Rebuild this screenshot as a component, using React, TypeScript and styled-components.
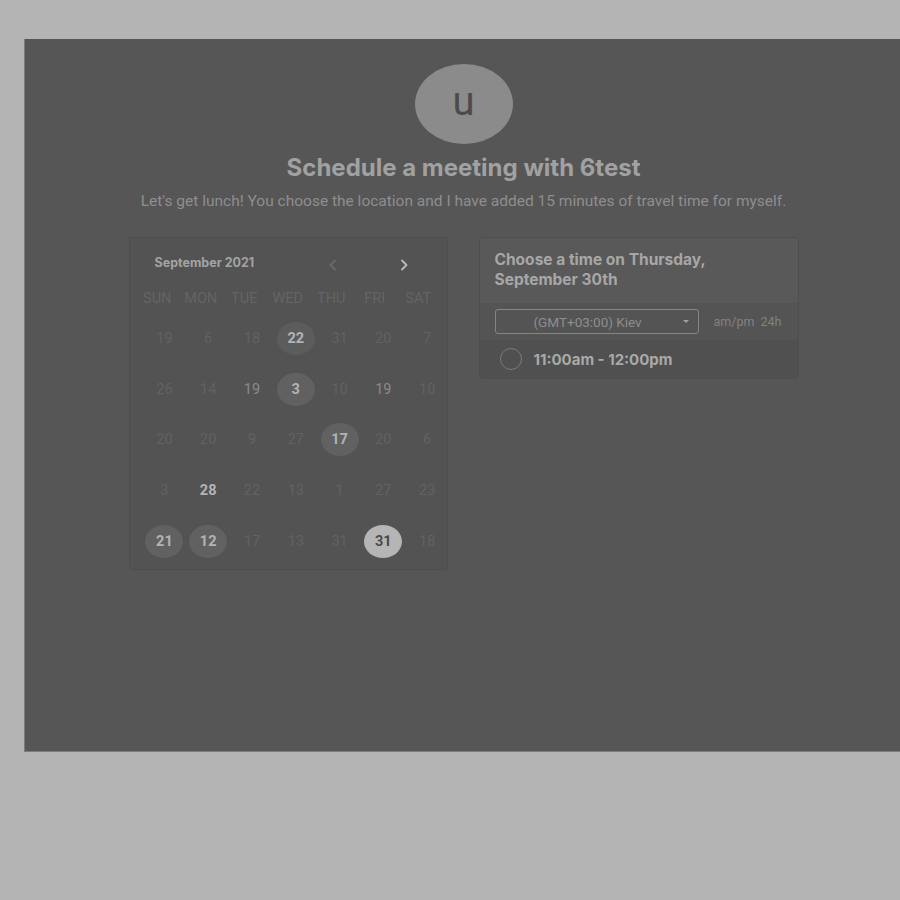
import React from "react";
import styled, { createGlobalStyle } from "styled-components";

const Global = createGlobalStyle`
  html, body { margin: 0; padding: 0; background: #b4b4b4; overflow: hidden; }
  body { font-family: Inter, "Liberation Sans", sans-serif; }
`;

const Page = styled.div`
  width: 900px;
  height: 900px;
  padding-top: 39px;
  padding-left: 24px;
  box-sizing: border-box;
  overflow: hidden;
`;

const Panel = styled.div`
  width: 878px;
  height: 713px;
  box-sizing: border-box;
  background: #565656;
  border-left: 1px solid #7c7c7c;
  border-bottom: 1px solid #7c7c7c;
  display: flex;
  flex-direction: column;
  align-items: center;
  padding-top: 25px;
`;

const Avatar = styled.div`
  width: 98px;
  height: 80px;
  border-radius: 50%;
  background: #8b8b8b;
  color: #4b4b4b;
  display: flex;
  align-items: center;
  justify-content: center;
  font-family: Roboto, "Liberation Sans", sans-serif;
  font-size: 40px;
  line-height: 1;
  padding-bottom: 4px;
  box-sizing: border-box;
`;

const Title = styled.h1`
  margin: 10px 0 0;
  font-family: Inter, "Liberation Sans", sans-serif;
  font-weight: 700;
  font-size: 24px;
  line-height: 28px;
  color: #a1a1a1;
`;

const Subtitle = styled.p`
  margin: 10px 0 0;
  font-family: Roboto, "Liberation Sans", sans-serif;
  font-size: 15.5px;
  line-height: 18px;
  color: #8e8e8e;
`;

const Cards = styled.div`
  margin-top: 27px;
  display: flex;
  gap: 31px;
  align-items: flex-start;
`;

const CalendarCard = styled.div`
  width: 319px;
  height: 333px;
  box-sizing: border-box;
  background: #535353;
  border: 1px solid #4d4d4d;
  border-radius: 3px;
  padding: 13px 0 0 6px;
`;

const MonthBar = styled.div`
  display: flex;
  align-items: center;
  height: 22px;
  padding-left: 19px;
`;

const MonthLabel = styled.div`
  font-family: Inter, "Liberation Sans", sans-serif;
  font-weight: 700;
  font-size: 12.5px;
  color: #a3a3a3;
  width: 168px;
`;

const Arrow = styled.span<{ $active?: boolean }>`
  display: flex;
  align-items: center;
  justify-content: center;
  width: 20px;
  height: 22px;
  margin-top: 5px;
  color: ${(p) => (p.$active ? "#bcbcbc" : "#6a6a6a")};
`;

const ArrowGap = styled.div`
  width: 51px;
`;

const Weekdays = styled.div`
  display: grid;
  grid-template-columns: repeat(7, 43.5px);
  margin-top: 17px;
  height: 16px;
  align-items: center;
`;

const Weekday = styled.div`
  text-align: center;
  font-family: Roboto, "Liberation Sans", sans-serif;
  font-size: 14.5px;
  color: #646464;
`;

const Days = styled.div`
  display: grid;
  grid-template-columns: repeat(7, 43.8px);
  grid-auto-rows: 50.75px;
  margin-top: 7px;
  margin-left: 7px;
`;

const DayCell = styled.div`
  display: flex;
  align-items: center;
  justify-content: center;
`;

type Kind = "dim" | "mid" | "bold" | "circle" | "dotted" | "selected";

const DayNum = styled.div<{ $kind: Kind }>`
  width: 38px;
  height: 33px;
  border-radius: 50%;
  display: flex;
  align-items: center;
  justify-content: center;
  font-family: Roboto, "Liberation Sans", sans-serif;
  font-size: 14.5px;
  font-weight: ${(p) => (p.$kind === "dim" || p.$kind === "mid" ? 400 : 700)};
  color: ${(p) =>
    p.$kind === "dim"
      ? "#626262"
      : p.$kind === "mid"
      ? "#8a8a8a"
      : p.$kind === "selected"
      ? "#4a4a4a"
      : "#b3b3b3"};
  background: ${(p) =>
    p.$kind === "circle"
      ? "#616161"
      : p.$kind === "dotted"
      ? "#5c5c5c"
      : p.$kind === "selected"
      ? "#b5b5b5"
      : "transparent"};
`;

const TimeCard = styled.div`
  width: 320px;
  box-sizing: border-box;
  border: 1px solid #4f4f4f;
  border-radius: 3px;
  overflow: hidden;
`;

const TimeHeader = styled.div`
  background: #595959;
  height: 65px;
  box-sizing: border-box;
  padding: 12px 16px 0 15px;
  font-family: Inter, "Liberation Sans", sans-serif;
  font-weight: 700;
  font-size: 15.5px;
  line-height: 20px;
  color: #a7a7a7;
`;

const ZoneRow = styled.div`
  background: #545454;
  height: 37px;
  display: flex;
  align-items: center;
  padding-left: 15px;
  gap: 15px;
`;

const ZoneSelect = styled.div`
  width: 204px;
  height: 25px;
  box-sizing: border-box;
  border: 1px solid #858585;
  border-radius: 3px;
  display: flex;
  align-items: center;
  padding-left: 38px;
  padding-right: 9px;
  font-family: Roboto, "Liberation Sans", sans-serif;
  font-size: 13.5px;
  color: #8e8e8e;
`;

const ZoneText = styled.span`
  flex: 1;
`;

const Caret = styled.span`
  width: 0;
  height: 0;
  border-left: 3px solid transparent;
  border-right: 3px solid transparent;
  border-top: 3px solid #a0a0a0;
`;

const Format = styled.div`
  font-family: Roboto, "Liberation Sans", sans-serif;
  font-size: 12.5px;
  color: #828282;
  word-spacing: 3px;
`;

const SlotRow = styled.div`
  background: #505050;
  height: 38px;
  display: flex;
  align-items: center;
  padding-left: 20px;
  gap: 12px;
`;

const Radio = styled.span`
  width: 22px;
  height: 22px;
  box-sizing: border-box;
  border-radius: 50%;
  border: 1.5px solid #7a7a7a;
`;

const SlotText = styled.span`
  font-family: Inter, "Liberation Sans", sans-serif;
  font-weight: 700;
  font-size: 15px;
  color: #a9a9a9;
`;

const weekdays = ["SUN", "MON", "TUE", "WED", "THU", "FRI", "SAT"];

const days: [string, Kind][] = [
  ["19", "dim"], ["6", "dim"], ["18", "dim"], ["22", "dotted"], ["31", "dim"], ["20", "dim"], ["7", "dim"],
  ["26", "dim"], ["14", "dim"], ["19", "mid"], ["3", "circle"], ["10", "dim"], ["19", "mid"], ["10", "dim"],
  ["20", "dim"], ["20", "dim"], ["9", "dim"], ["27", "dim"], ["17", "circle"], ["20", "dim"], ["6", "dim"],
  ["3", "dim"], ["28", "bold"], ["22", "dim"], ["13", "dim"], ["1", "dim"], ["27", "dim"], ["23", "dim"],
  ["21", "circle"], ["12", "circle"], ["17", "dim"], ["13", "dim"], ["31", "dim"], ["31", "selected"], ["18", "dim"],
];

const Chevron = ({ dir }: { dir: "left" | "right" }) => (
  <svg width="10" height="12" viewBox="0 0 10 12" fill="none">
    <path
      d={dir === "left" ? "M7 1.5L2.5 6L7 10.5" : "M3 1.5L7.5 6L3 10.5"}
      stroke="currentColor"
      strokeWidth="1.8"
      strokeLinecap="round"
      strokeLinejoin="round"
    />
  </svg>
);

export default function App() {
  return (
    <>
      <Global />
      <Page>
        <Panel>
          <Avatar>u</Avatar>
          <Title>Schedule a meeting with 6test</Title>
          <Subtitle>
            Let's get lunch! You choose the location and I have added 15 minutes of travel time for myself.
          </Subtitle>
          <Cards>
            <CalendarCard>
              <MonthBar>
                <MonthLabel>September 2021</MonthLabel>
                <Arrow>
                  <Chevron dir="left" />
                </Arrow>
                <ArrowGap />
                <Arrow $active>
                  <Chevron dir="right" />
                </Arrow>
              </MonthBar>
              <Weekdays>
                {weekdays.map((w) => (
                  <Weekday key={w}>{w}</Weekday>
                ))}
              </Weekdays>
              <Days>
                {days.map(([n, k], i) => (
                  <DayCell key={i}>
                    <DayNum $kind={k}>{n}</DayNum>
                  </DayCell>
                ))}
              </Days>
            </CalendarCard>
            <TimeCard>
              <TimeHeader>
                Choose a time on Thursday,
                <br />
                September 30th
              </TimeHeader>
              <ZoneRow>
                <ZoneSelect>
                  <ZoneText>(GMT+03:00) Kiev</ZoneText>
                  <Caret />
                </ZoneSelect>
                <Format>am/pm 24h</Format>
              </ZoneRow>
              <SlotRow>
                <Radio />
                <SlotText>11:00am - 12:00pm</SlotText>
              </SlotRow>
            </TimeCard>
          </Cards>
        </Panel>
      </Page>
    </>
  );
}
